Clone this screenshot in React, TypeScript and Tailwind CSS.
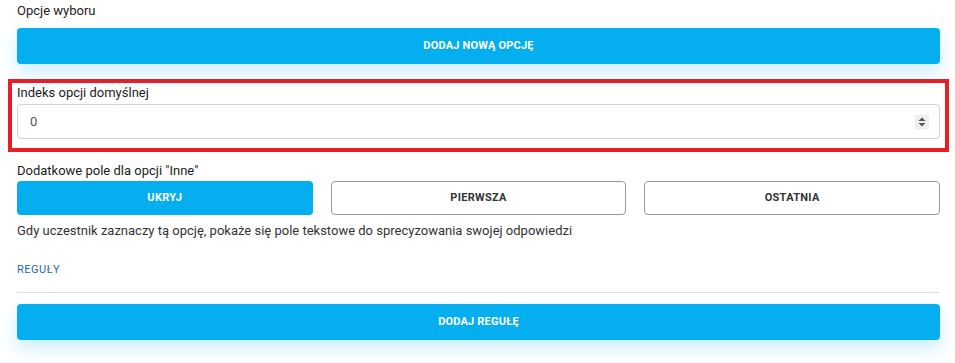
import React from 'react';

const primaryBtn =
  'h-[36px] w-full rounded-[4px] bg-[#05aeef] text-[11px] font-bold uppercase tracking-[0.2px] text-white shadow-[0_8px_18px_rgba(5,174,239,0.22)]';

function Spinner() {
  return (
    <div className="absolute right-[11px] top-1/2 flex h-[15px] w-[14px] -translate-y-1/2 items-center justify-center bg-[#efefef]">
      <svg width="8" height="11" viewBox="0 0 8 11">
        <path d="M4 1 L7.5 4.5 H0.5 Z" fill="#555" />
        <path d="M4 10 L7.5 6.5 H0.5 Z" fill="#555" />
      </svg>
    </div>
  );
}

export default function App() {
  const modes = ['Ukryj', 'Pierwsza', 'Ostatnia'];
  const active = 0;

  return (
    <div className="h-[363px] w-[955px] overflow-hidden bg-white font-['Roboto',sans-serif] text-[#1c1c1c]">
      <div className="ml-[17px] w-[923px] pt-[2px]">
        {/* Opcje wyboru */}
        <div className="text-[13px] leading-[18px]">Opcje wyboru</div>
        <button className={`${primaryBtn} mt-[8px]`}>Dodaj nową opcję</button>

        {/* Indeks opcji domyślnej (highlighted) */}
        <div className="-mx-[9px] mt-[15px] border-[4px] border-[#ea1c24] px-[5px] pb-[9px] pt-[1px]">
          <div className="text-[13px] leading-[18px]">Indeks opcji domyślnej</div>
          <div className="relative mt-[2px]">
            <input
              type="text"
              defaultValue="0"
              className="h-[35px] w-full rounded-[4px] border border-[#cfd2d6] bg-white px-[12px] text-[13px] text-[#555] outline-none"
            />
            <Spinner />
          </div>
        </div>

        {/* Dodatkowe pole */}
        <div className="mt-[10px] text-[13px] leading-[18px]">Dodatkowe pole dla opcji "Inne"</div>
        <div className="mt-[1px] grid grid-cols-3 gap-[18px]">
          {modes.map((m, i) =>
            i === active ? (
              <button
                key={m}
                className="h-[34px] rounded-[4px] bg-[#05aeef] text-[11px] font-bold uppercase tracking-[0.3px] text-white"
              >
                {m}
              </button>
            ) : (
              <button
                key={m}
                className="h-[34px] rounded-[4px] border border-[#9a9a9a] bg-white text-[11px] font-bold uppercase tracking-[0.3px] text-[#333]"
              >
                {m}
              </button>
            )
          )}
        </div>
        <div className="mt-[7px] text-[13px] leading-[18px] text-[#333]">
          Gdy uczestnik zaznaczy tą opcję, pokaże się pole tekstowe do sprecyzowania swojej odpowiedzi
        </div>

        {/* Reguły */}
        <div className="mt-[22px] text-[11px] uppercase leading-[16px] tracking-[0.5px] text-[#2b6a96]">
          Reguły
        </div>
        <div className="mt-[14px] h-px bg-[#dcdfe3]" />
        <button className={`${primaryBtn} mt-[11px]`}>Dodaj regułę</button>
      </div>
    </div>
  );
}
